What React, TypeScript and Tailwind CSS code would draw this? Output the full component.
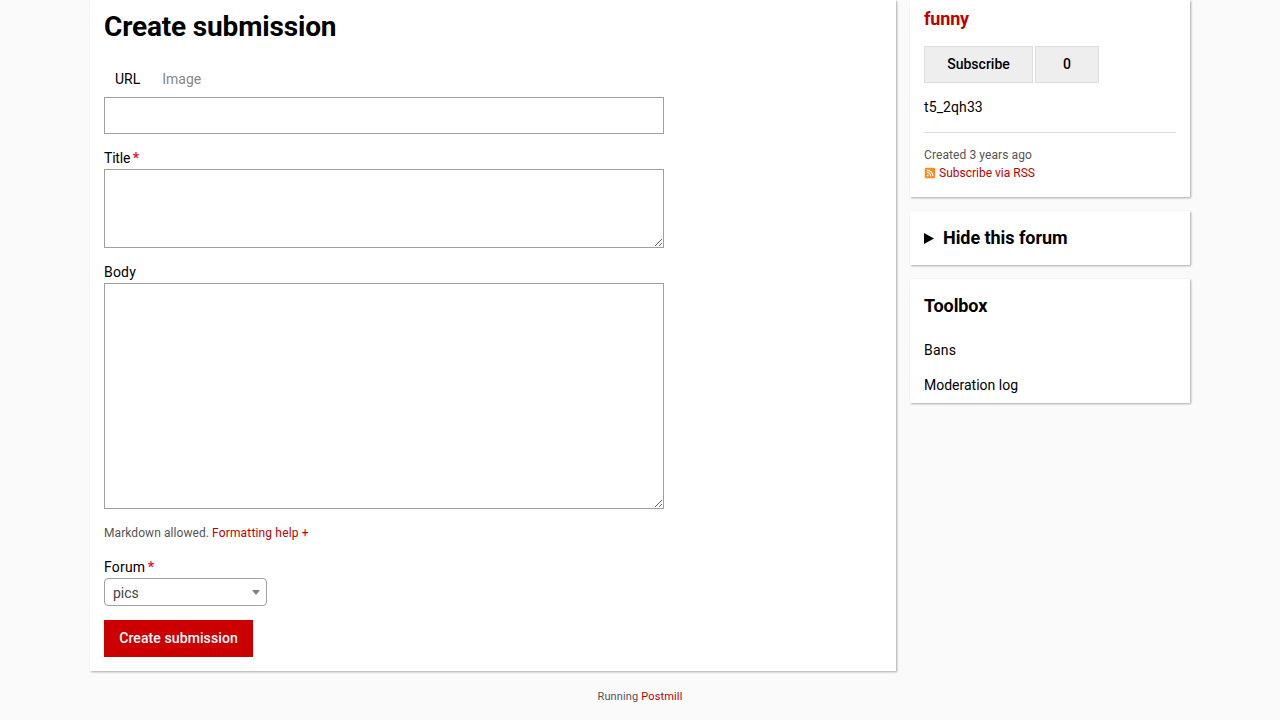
import type { ReactNode } from "react";

const CARD = "bg-white shadow-[1px_1px_2px_rgba(0,0,0,0.33)]";
const FIELD = "block w-[560px] border border-[#a0a0a0] bg-white px-2 outline-none";

function Label({ children, required }: { children: ReactNode; required?: boolean }) {
  return (
    <div className="h-[21px] leading-[21px]">
      {children}
      {required && <span className="ml-[2.5px] font-bold text-[#f01018]">*</span>}
    </div>
  );
}

function RssIcon() {
  return (
    <svg className="mr-[3px] h-3 w-3" viewBox="0 0 12 12" fill="none">
      <rect x="0.8" y="0.8" width="10.4" height="10.4" rx="1.5" fill="#f78b1f" />
      <circle cx="3.7" cy="8.5" r="0.9" fill="#fff" />
      <path d="M2.8 5.4a3.8 3.8 0 0 1 3.8 3.8M2.8 3.1a6.1 6.1 0 0 1 6.1 6.1" stroke="#fff" strokeWidth="1.1" />
    </svg>
  );
}

function SubmissionForm() {
  return (
    <main className={`h-[671px] w-[806px] px-[14px] pt-[6px] ${CARD}`}>
      <h1 className="h-[42px] text-[28px] font-bold leading-[42px] tracking-[-0.16px]">Create submission</h1>
      <div className="mt-[14px] flex h-[35px] gap-[22px] pl-[11px] leading-[35px]">
        <span>URL</span>
        <span className="text-[#888]">Image</span>
      </div>
      <input className={`h-[37px] ${FIELD}`} />
      <div className="mt-[14px]">
        <Label required>
          <span className="tracking-[-0.2px]">Title</span>
        </Label>
        <textarea className={`h-[79px] resize ${FIELD}`} />
      </div>
      <div className="mt-[14px]">
        <Label>
          <span className="tracking-[0.2px]">Body</span>
        </Label>
        <textarea className={`h-[226px] resize ${FIELD}`} />
      </div>
      <p className="mt-[14px] h-5 text-xs leading-5 text-[#555]">
        <span className="tracking-[0.07px]">Markdown allowed. </span>
        <a className="tracking-[0.16px] text-[#c00000]">Formatting help +</a>
      </p>
      <div className="mt-[14px]">
        <Label required>
          <span className="tracking-[0.2px]">Forum</span>
        </Label>
        <div className="flex h-7 w-[163px] items-center justify-between rounded-[4px] border border-[#a0a0a0] pl-2 pr-[6px] text-[#444]">
          <span className="pt-[2px]">pics</span>
          <svg className="h-[5px] w-2" viewBox="0 0 8 5">
            <path d="M0 0h8L4 5z" fill="#808080" />
          </svg>
        </div>
      </div>
      <button className="mt-[14px] h-[37px] w-[149px] bg-[#c00] font-medium tracking-[0.1px] text-white">
        Create submission
      </button>
    </main>
  );
}

function Sidebar() {
  return (
    <aside className="flex w-[280px] flex-col gap-[14px]">
      <section className={`h-[197px] px-[14px] pt-[5px] ${CARD}`}>
        <h2 className="h-[27px] text-[18px] font-bold leading-[27px] tracking-[-0.15px] text-[#c00000]">funny</h2>
        <div className="mt-[14px] flex gap-[2px] font-medium">
          <button className="h-[37px] w-[109px] border border-[#ddd] bg-[#eee]">Subscribe</button>
          <span className="flex h-[37px] w-16 items-center justify-center border border-[#ddd] bg-[#eee]">0</span>
        </div>
        <p className="mt-[14px] h-[21px] leading-[21px] tracking-[0.1px]">t5_2qh33</p>
        <hr className="mt-[14px] border-[#ddd]" />
        <div className="mt-[13px] text-xs leading-[18px] text-[#555]">
          <p className="tracking-[0.09px]">Created 3 years ago</p>
          <a className="flex items-center text-[#c00000]">
            <RssIcon />
            Subscribe via RSS
          </a>
        </div>
      </section>
      <section className={`flex h-[54px] items-center px-[14px] ${CARD}`}>
        <svg className="mr-[9px] h-[11px] w-[10px]" viewBox="0 0 10 11">
          <path d="M0 0l10 5.5L0 11z" />
        </svg>
        <h2 className="pb-px text-[18px] font-bold leading-[26px] tracking-[-0.05px]">Hide this forum</h2>
      </section>
      <section className={`h-[124px] px-[14px] ${CARD}`}>
        <h2 className="h-[54px] text-[18px] font-bold leading-[54px] tracking-[-0.1px]">Toolbox</h2>
        <ul className="leading-[35px]">
          <li className="tracking-[0.2px]">Bans</li>
          <li>Moderation log</li>
        </ul>
      </section>
    </aside>
  );
}

export default function App() {
  return (
    <div className="h-[720px] overflow-hidden bg-[#fafafa] font-['Roboto',sans-serif] text-[14px] leading-[21px] text-black">
      <div className="flex items-start gap-[14px] pl-[90px]">
        <SubmissionForm />
        <Sidebar />
      </div>
      <footer className="mt-[17px] h-[18px] text-center text-[11px] leading-[18px] tracking-[0.14px] text-[#555]">
        Running <a className="text-[#c00000]">Postmill</a>
      </footer>
    </div>
  );
}
